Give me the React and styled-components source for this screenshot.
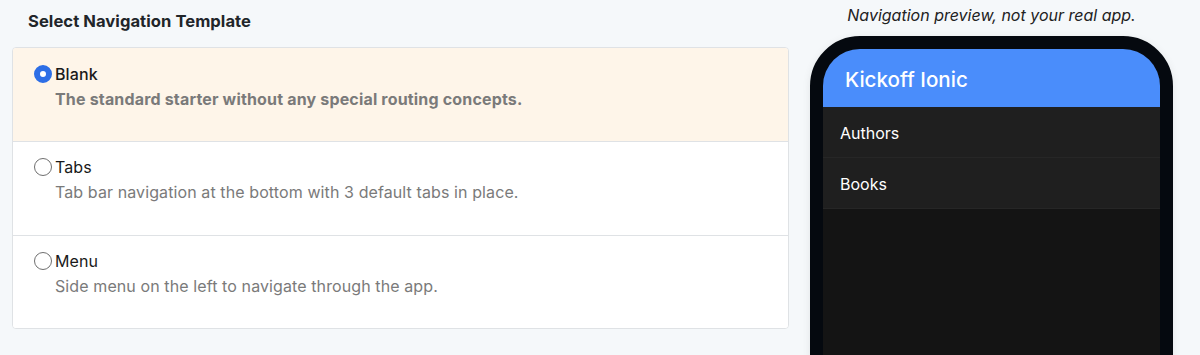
import React from "react";
import styled, { createGlobalStyle } from "styled-components";

const Global = createGlobalStyle`
  html, body { margin: 0; padding: 0; background: #f5f8fa; }
  body { font-family: Inter, "Liberation Sans", sans-serif; color: #212529; overflow: hidden; }
  * { box-sizing: border-box; }
`;

const Page = styled.div`
  display: flex;
  align-items: flex-start;
  gap: 1px;
  padding: 0 7px 0 12px;
  height: 355px;
  overflow: hidden;
`;

const LeftCol = styled.div`
  width: 777px;
  flex: none;
`;

const Title = styled.h2`
  margin: 0;
  padding: 11px 0 0 16px;
  height: 47px;
  font-size: 16.6px;
  line-height: 20px;
  font-weight: 700;
  letter-spacing: 0.05px;
  color: #212529;
`;

const Card = styled.div`
  border: 1px solid #dfe2e5;
  border-radius: 4px;
  background: #fff;
  overflow: hidden;
`;

const Option = styled.label`
  display: block;
  height: ${(p) => (p.$first ? "93px" : p.$last ? "93px" : "94px")};
  padding: ${(p) => (p.$first ? "14px" : "13px")} 20px 0 21px;
  background: ${(p) => (p.$selected ? "#fef5e9" : "#fff")};
  border-top: ${(p) => (p.$first ? "none" : "1px solid #dfe2e5")};
  cursor: pointer;
`;

const LabelRow = styled.div`
  display: flex;
  align-items: center;
  gap: 3px;
  height: 24px;
`;

const Radio = styled.span`
  width: 18px;
  height: 18px;
  border-radius: 50%;
  flex: none;
  box-sizing: border-box;
  border: ${(p) => (p.$checked ? "6px solid #2d6ee6" : "1px solid #6f6f6f")};
  background: #fff;
`;

const Name = styled.span`
  font-size: 16px;
  color: #1a1a1a;
  letter-spacing: 0.1px;
  font-weight: ${(p) => (p.$selected ? 500 : 400)};
`;

const Desc = styled.p`
  margin: 1px 0 0 21px;
  font-size: 16px;
  line-height: 24px;
  color: #7a7a7a;
  letter-spacing: ${(p) => (p.$selected ? "0.17px" : "0.1px")};
  font-weight: ${(p) => (p.$selected ? 700 : 400)};
`;

const RightCol = styled.div`
  width: 403px;
  flex: none;
  display: flex;
  flex-direction: column;
  align-items: center;
`;

const Caption = styled.p`
  margin: 0;
  padding-top: 5px;
  height: 36px;
  font-size: 16px;
  line-height: 20px;
  font-style: italic;
  color: #222;
`;

const Phone = styled.div`
  width: 363px;
  height: 420px;
  border: 13px solid #05090f;
  border-radius: 50px;
  background: #141414;
  overflow: hidden;
  box-shadow: 0 2px 8px rgba(0, 0, 0, 0.08);
`;

const Header = styled.div`
  height: 58px;
  background: #4a8dfb;
  color: #fff;
  display: flex;
  align-items: center;
  padding: 3px 0 0 22px;
  font-size: 20.6px;
  font-weight: 500;
`;

const NavItem = styled.div`
  height: 51px;
  background: #1f1f1f;
  border-bottom: 1px solid #262626;
  color: #fff;
  display: flex;
  align-items: center;
  padding: 2px 0 0 17px;
  font-size: 16px;
`;

const options = [
  { name: "Blank", desc: "The standard starter without any special routing concepts.", selected: true },
  { name: "Tabs", desc: "Tab bar navigation at the bottom with 3 default tabs in place." },
  { name: "Menu", desc: "Side menu on the left to navigate through the app." },
];

export default function App() {
  return (
    <>
      <Global />
      <Page>
        <LeftCol>
          <Title>Select Navigation Template</Title>
          <Card>
            {options.map((o, i) => (
              <Option key={o.name} $selected={o.selected} $first={i === 0} $last={i === options.length - 1}>
                <LabelRow>
                  <Radio $checked={o.selected} />
                  <Name $selected={o.selected}>{o.name}</Name>
                </LabelRow>
                <Desc $selected={o.selected}>{o.desc}</Desc>
              </Option>
            ))}
          </Card>
        </LeftCol>
        <RightCol>
          <Caption>Navigation preview, not your real app.</Caption>
          <Phone>
            <Header>Kickoff Ionic</Header>
            <NavItem>Authors</NavItem>
            <NavItem>Books</NavItem>
          </Phone>
        </RightCol>
      </Page>
    </>
  );
}
